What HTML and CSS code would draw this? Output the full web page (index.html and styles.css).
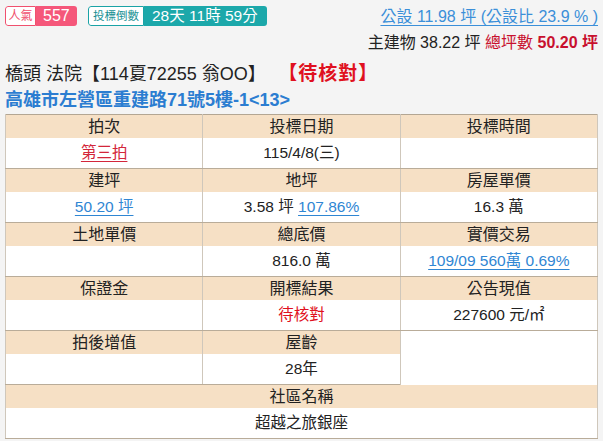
FILE: index.html
```html
<!DOCTYPE html>
<html lang="zh-Hant">
<head>
<meta charset="utf-8">
<link rel="stylesheet" href="styles.css">
</head>
<body>
<div class="page">
  <div class="top">
    <div class="badges">
      <div class="badge pop"><span class="lbl">人氣</span><span class="val">557</span></div>
      <div class="badge count"><span class="lbl">投標倒數</span><span class="val">28天 11時 59分</span></div>
    </div>
    <div class="areas">
      <a class="pub">公設 11.98 坪 (公設比 23.9 % )</a>
      <div class="main">主建物 38.22 坪 <span class="tot">總坪數</span> <b class="tot">50.20 坪</b></div>
    </div>
  </div>
  <div class="title">橋頭 法院【114夏72255 翁OO】<span class="status">【待核對】</span></div>
  <div class="addr">高雄市左營區重建路71號5樓-1&lt;13&gt;</div>
  <table class="info">
    <tr class="h"><td>拍次</td><td>投標日期</td><td>投標時間</td></tr>
    <tr class="d"><td><a class="red">第三拍</a></td><td>115/4/8(三)</td><td></td></tr>
    <tr class="h"><td>建坪</td><td>地坪</td><td>房屋單價</td></tr>
    <tr class="d"><td><a class="blue">50.20 坪</a></td><td>3.58 坪 <a class="blue">107.86%</a></td><td>16.3 萬</td></tr>
    <tr class="h"><td>土地單價</td><td>總底價</td><td>實價交易</td></tr>
    <tr class="d"><td></td><td>816.0 萬</td><td><a class="blue">109/09 560萬 0.69%</a></td></tr>
    <tr class="h"><td>保證金</td><td>開標結果</td><td>公告現值</td></tr>
    <tr class="d"><td></td><td><span class="plainred">待核對</span></td><td>227600 元/㎡</td></tr>
    <tr class="h"><td>拍後增值</td><td>屋齡</td><td class="blank" rowspan="2"></td></tr>
    <tr class="d"><td></td><td>28年</td></tr>
    <tr class="h"><td colspan="3">社區名稱</td></tr>
    <tr class="d last"><td colspan="3">超越之旅銀座</td></tr>
  </table>
</div>
</body>
</html>
```

FILE: styles.css
```css
html, body {
  margin: 0;
  padding: 0;
  background: #f4f4f4;
  font-family: "Liberation Sans", "Noto Sans CJK TC", sans-serif;
  color: #222;
}
.page {
  padding: 6px 5px 0 5px;
}
.top {
  display: flex;
  justify-content: space-between;
  align-items: flex-start;
  height: 56px;
}
.badges {
  display: flex;
  gap: 11px;
}
.badge {
  display: flex;
  height: 20px;
  border-radius: 3px;
  overflow: hidden;
}
.badge .lbl {
  background: #fff;
  line-height: 18px;
  text-align: center;
  box-sizing: border-box;
  border-radius: 3px 0 0 3px;
  white-space: nowrap;
}
.badge .val {
  color: #fff;
  line-height: 20px;
  box-sizing: border-box;
  white-space: nowrap;
}
.pop .lbl {
  color: #f0506e;
  border: 1px solid #f0506e;
  width: 31px;
  font-size: 12px;
}
.pop .val {
  background: #f5577a;
  font-size: 16px;
  width: 41px;
  padding-left: 7px;
}
.count .lbl {
  color: #178f93;
  border: 1px solid #1aa3a6;
  width: 56px;
  font-size: 11.5px;
}
.count .val {
  background: #1ca8aa;
  font-size: 15.5px;
  width: 123px;
  padding-left: 8px;
}
.areas {
  display: flex;
  flex-direction: column;
  align-items: flex-end;
}
.pub {
  color: #3b8fd9;
  font-size: 16px;
  line-height: 20px;
  text-decoration: underline;
  text-underline-offset: 3px;
  margin-top: 1px;
}
.main {
  font-size: 16px;
  line-height: 20px;
  margin-top: 6px;
  color: #222;
}
.tot {
  color: #c8102e;
}
.title {
  font-size: 18px;
  line-height: 22px;
  color: #222;
  margin-top: 1px;
}
.status {
  color: #e01020;
  font-weight: bold;
  font-size: 19px;
  letter-spacing: 1px;
  margin-left: 22px;
}
.addr {
  font-size: 18px;
  line-height: 22px;
  font-weight: bold;
  color: #2b7dd1;
  margin-top: 4px;
}
.info {
  width: 593px;
  border-collapse: collapse;
  table-layout: fixed;
  margin-top: 3px;
  border: 1px solid #b3a693;
  background: #fff;
}
.info td {
  text-align: center;
  border-left: 1px solid #cfc7bb;
  border-right: 1px solid #cfc7bb;
  padding: 0;
}
.info tr.h td {
  background: #f6e0c5;
  height: 23px;
  font-size: 16px;
  line-height: 23px;
  color: #222;
}
.info tr.h td.blank {
  background: #fff;
}
.info tr.d td {
  height: 30px;
  font-size: 15.5px;
  line-height: 30px;
  color: #222;
  border-bottom: 1px solid #b9ac99;
}
.info a.blue {
  color: #2f86d3;
  text-decoration: underline;
  text-underline-offset: 3px;
}
.info a.red {
  color: #d3263a;
  text-decoration: underline;
  text-underline-offset: 3px;
}
.plainred {
  color: #e01020;
}
```
